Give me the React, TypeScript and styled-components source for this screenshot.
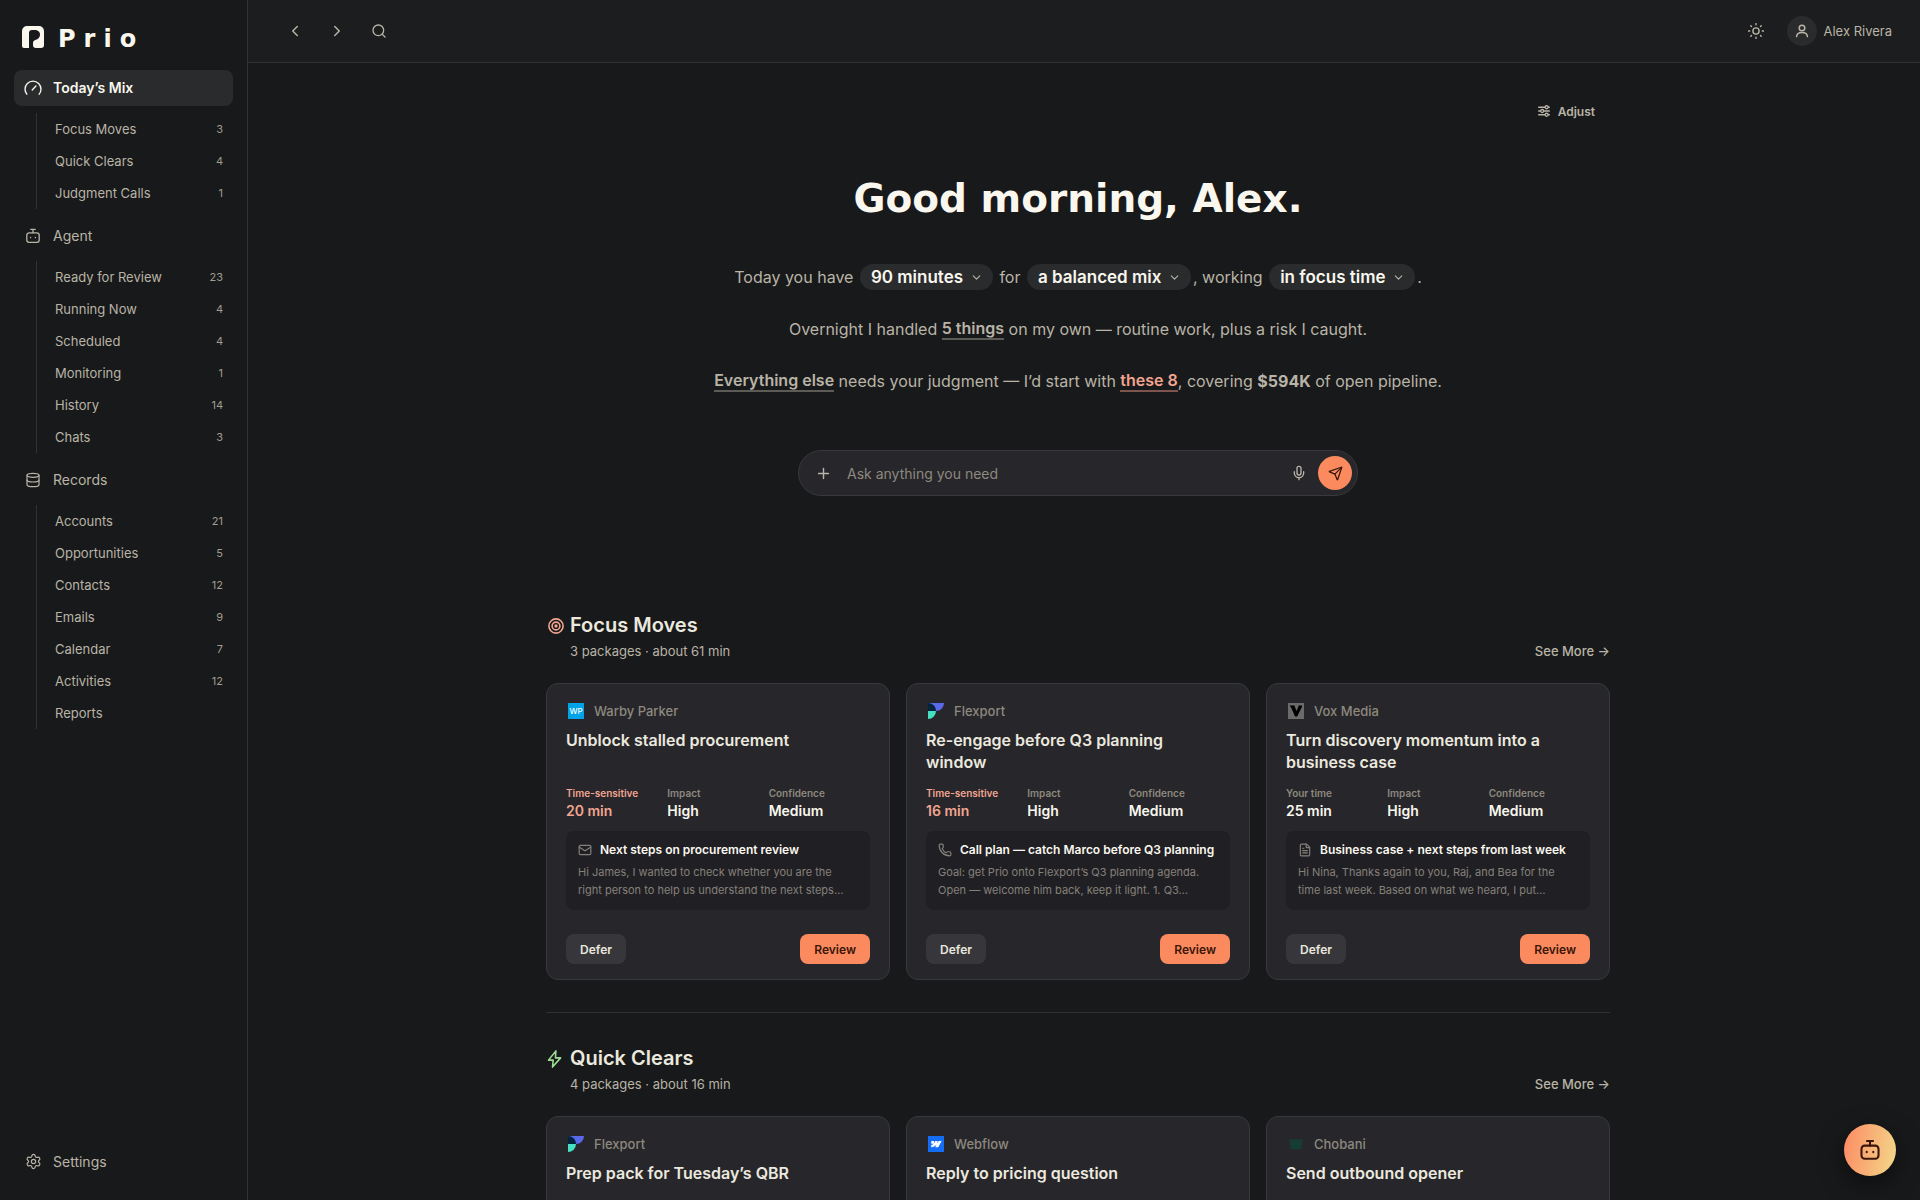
import React from "react";
import styled, { createGlobalStyle, css } from "styled-components";
import {
  ChevronDown,
  ChevronLeft,
  ChevronRight,
  Database,
  FileText,
  Mail,
  Mic,
  Phone,
  Plus,
  Search,
  Send,
  Settings,
} from "lucide-react";

const color = {
  page: "#18191a",
  header: "#1c1d1e",
  line: "#313234",
  raised: "#2a2b2d",
  card: "#27262b",
  cardLine: "#39383c",
  inset: "#201f24",
  quiet: "#37363b",
  bright: "#f9f7ee",
  strong: "#ebe9df",
  text: "#b8b4a7",
  dim: "#8d897e",
  faint: "#85817a",
  accent: "#fb8a5f",
  onAccent: "#3a1608",
  warm: "#f2a590",
  green: "#9edb96",
};

const GlobalStyle = createGlobalStyle`
  *, *::before, *::after { box-sizing: border-box; }
  body {
    margin: 0;
    background: ${color.page};
    color: ${color.text};
    font-family: Inter, "Liberation Sans", sans-serif;
    font-size: 13px;
    -webkit-font-smoothing: antialiased;
  }
  button, input, select { font: inherit; color: inherit; }
  button { cursor: pointer; }
  h1, h2, h3, p, ul, dl, dd, dt { margin: 0; padding: 0; }
  ul { list-style: none; }
  a { color: inherit; text-decoration: none; }
  svg { display: block; flex: none; }
`;

const Shell = styled.div`
  display: flex;
  height: 100vh;
  overflow: hidden;
`;

const Sidebar = styled.aside`
  display: flex;
  flex-direction: column;
  flex: none;
  width: 248px;
  padding: 26px 14px 20px;
  border-right: 1px solid ${color.line};
`;

const Brand = styled.a`
  display: flex;
  align-items: center;
  gap: 14px;
  height: 22px;
  margin-bottom: 22px;
  padding-left: 8px;
  color: ${color.bright};
`;

const BrandName = styled.span`
  padding-top: 4px;
  font-family: "DejaVu Sans", sans-serif;
  font-size: 24px;
  font-weight: 700;
  line-height: 22px;
  letter-spacing: 8px;
`;

const NavLink = styled.a<{ $active?: boolean }>`
  display: flex;
  align-items: center;
  gap: 11px;
  height: 36px;
  padding: 0 10px 1px;
  border-radius: 8px;
  font-size: 14px;
  color: ${color.text};
  ${(p) =>
    p.$active &&
    css`
      background: ${color.raised};
      color: ${color.bright};
      font-weight: 600;
    `}
`;

const NavIcon = styled.span`
  display: grid;
  place-items: center;
  width: 18px;
`;

const SubList = styled.ul`
  margin: 7px 0 9px 22px;
  border-left: 1px solid ${color.line};
`;

const SubLink = styled.a`
  display: flex;
  align-items: center;
  justify-content: space-between;
  height: 32px;
  padding: 0 10px 0 18px;
`;

const Count = styled.span`
  font-size: 11px;
  color: #a19d92;
`;

const SidebarFoot = styled.div`
  margin-top: auto;
`;

const Main = styled.div`
  display: flex;
  flex-direction: column;
  flex: 1;
  min-width: 0;
`;

const Header = styled.header`
  display: flex;
  align-items: center;
  justify-content: space-between;
  flex: none;
  height: 63px;
  padding: 0 28px 0 35px;
  background: ${color.header};
  border-bottom: 1px solid ${color.line};
`;

const Cluster = styled.div<{ $gap: number }>`
  display: flex;
  align-items: center;
  gap: ${(p) => p.$gap}px;
`;

const IconButton = styled.button`
  display: grid;
  place-items: center;
  width: 24px;
  height: 24px;
  padding: 0;
  border: 0;
  background: none;
`;

const Profile = styled.button`
  display: flex;
  align-items: center;
  gap: 7px;
  padding: 0;
  border: 0;
  background: none;
`;

const Avatar = styled.span`
  display: grid;
  place-items: center;
  width: 30px;
  height: 30px;
  border-radius: 50%;
  background: ${color.raised};
`;

const Scroller = styled.main`
  flex: 1;
  min-height: 0;
  overflow: hidden;
  padding: 33px 36px 0 24px;
`;

const Column = styled.div`
  max-width: 1064px;
  margin: 0 auto;
`;

const Toolbar = styled.div`
  display: flex;
  justify-content: flex-end;
  padding-right: 15px;
`;

const AdjustButton = styled.button`
  display: flex;
  align-items: center;
  gap: 8px;
  height: 30px;
  padding: 0;
  border: 0;
  background: none;
  font-size: 12px;
  font-weight: 600;
`;

const Hero = styled.section`
  display: flex;
  flex-direction: column;
  align-items: center;
  text-align: center;
`;

const Greeting = styled.h1`
  margin: 48px 0 40px;
  font-family: "DejaVu Sans", sans-serif;
  font-size: 39px;
  line-height: 50px;
  font-weight: 700;
  color: ${color.bright};
`;

const Sentence = styled.p`
  display: flex;
  flex-wrap: wrap;
  align-items: center;
  justify-content: center;
  min-height: 26px;
  margin-bottom: 26px;
  font-size: 16px;
  line-height: 26px;
  white-space: pre-wrap;
`;

const Pill = styled.label`
  display: flex;
  align-items: center;
  gap: 6px;
  height: 26px;
  margin: 0 2px;
  padding: 0 10px 0 11px;
  border-radius: 13px;
  background: ${color.raised};
`;

const PillSelect = styled.select`
  appearance: none;
  padding: 0;
  border: 0;
  background: none;
  color: ${color.bright};
  font-size: 17px;
  font-weight: 600;
`;

const InlineLink = styled.a<{ $warm?: boolean }>`
  font-weight: 600;
  color: ${(p) => (p.$warm ? color.warm : color.text)};
  border-bottom: 2px solid ${(p) => (p.$warm ? "#7c564c" : "#5d5b56")};
  line-height: 20px;
`;

const AskBar = styled.form`
  display: flex;
  align-items: center;
  width: 100%;
  max-width: 560px;
  height: 46px;
  margin: 30px 0 116px;
  padding: 0 5px 0 12px;
  border: 1px solid ${color.cardLine};
  border-radius: 23px;
  background: ${color.card};
`;

const AskInput = styled.input`
  flex: 1;
  min-width: 0;
  padding: 0 12px;
  border: 0;
  outline: 0;
  background: none;
  font-size: 14px;
  &::placeholder {
    color: ${color.dim};
    opacity: 1;
  }
`;

const SendButton = styled.button`
  display: grid;
  place-items: center;
  width: 34px;
  height: 34px;
  margin-left: 7px;
  padding: 0;
  border: 0;
  border-radius: 50%;
  background: ${color.accent};
  color: ${color.onAccent};
`;

const Section = styled.section`
  & + & {
    margin-top: 32px;
    padding-top: 32px;
    border-top: 1px solid ${color.line};
  }
`;

const SectionHead = styled.div`
  display: grid;
  grid-template-columns: 18px 1fr auto;
  gap: 2px 6px;
  align-items: center;
  justify-items: start;
  margin-bottom: 21px;
`;

const SectionIcon = styled.span<{ $tone: "warm" | "green" }>`
  justify-self: end;
  padding-top: 2px;
  color: ${(p) => color[p.$tone]};
`;

const SectionTitle = styled.h2`
  grid-column: 2 / 4;
  font-size: 20px;
  line-height: 26px;
  font-weight: 600;
  color: ${color.strong};
`;

const SectionMeta = styled.p`
  grid-column: 2;
  font-size: 13px;
  line-height: 22px;
`;

const SeeMore = styled.a`
  font-size: 13px;
  font-weight: 500;
  line-height: 22px;
`;

const CardGrid = styled.div`
  display: grid;
  grid-template-columns: repeat(3, minmax(0, 1fr));
  gap: 16px;
`;

const Card = styled.article`
  padding: 15px 19px;
  border: 1px solid ${color.cardLine};
  border-radius: 12px;
  background: ${color.card};
`;

const Company = styled.div`
  display: flex;
  align-items: center;
  gap: 10px;
  height: 24px;
  margin-bottom: 6px;
  padding-left: 2px;
  font-size: 13px;
  font-weight: 500;
  color: ${color.dim};
`;

const CardTitle = styled.h3`
  min-height: 44px;
  margin-bottom: 12px;
  padding-right: 16px;
  font-size: 16px;
  line-height: 22px;
  font-weight: 600;
  color: ${color.strong};
`;

const Metrics = styled.dl`
  display: grid;
  grid-template-columns: repeat(3, 1fr);
  margin-bottom: 10px;
`;

const Metric = styled.div<{ $warm?: boolean }>`
  dt {
    font-size: 10px;
    line-height: 16px;
    font-weight: 600;
    color: ${(p) => (p.$warm ? color.warm : color.dim)};
  }
  dd {
    font-size: 14px;
    line-height: 20px;
    font-weight: 600;
    color: ${(p) => (p.$warm ? color.warm : color.bright)};
  }
`;

const Preview = styled.div`
  height: 79px;
  margin-bottom: 24px;
  padding: 9px 12px;
  border-radius: 8px;
  background: ${color.inset};
  color: ${color.faint};
`;

const PreviewTitle = styled.div`
  display: flex;
  align-items: center;
  gap: 8px;
  margin-bottom: 3px;
  font-size: 12px;
  line-height: 20px;
  font-weight: 600;
  white-space: nowrap;

  span {
    color: ${color.bright};
  }
`;

const PreviewText = styled.p`
  display: -webkit-box;
  -webkit-box-orient: vertical;
  -webkit-line-clamp: 2;
  overflow: hidden;
  font-size: 11px;
  line-height: 18px;
`;

const Actions = styled.div`
  display: flex;
  justify-content: space-between;
`;

const Button = styled.button<{ $primary?: boolean }>`
  height: 30px;
  padding: 0 14px;
  border: 0;
  border-radius: 8px;
  font-size: 12px;
  font-weight: 600;
  background: ${(p) => (p.$primary ? color.accent : color.quiet)};
  color: ${(p) => (p.$primary ? color.onAccent : color.strong)};
`;

const AgentButton = styled.button`
  position: fixed;
  right: 24px;
  bottom: 24px;
  display: grid;
  place-items: center;
  width: 52px;
  height: 52px;
  padding: 0;
  border: 0;
  border-radius: 50%;
  background: linear-gradient(100deg, #fd8a63, #f3d98a);
  color: ${color.onAccent};
  box-shadow: 0 8px 24px rgba(0, 0, 0, 0.5);
`;

const Glyph = ({ size = 16, stroke = 1.5, children }: { size?: number; stroke?: number; children: React.ReactNode }) => (
  <svg
    width={size}
    height={size}
    viewBox="0 0 16 16"
    fill="none"
    stroke="currentColor"
    strokeWidth={stroke}
    strokeLinecap="round"
    strokeLinejoin="round"
    aria-hidden="true"
  >
    {children}
  </svg>
);

const GaugeIcon = () => (
  <Glyph size={18} stroke={1.2}>
    <path d="M2.5 13.5A7.2 7.2 0 0 1 .9 9a7.1 7.1 0 0 1 14.2 0 7.2 7.2 0 0 1-1.6 4.5" />
    <path d="M7.3 9.7 10.6 6.2" />
  </Glyph>
);

const BotIcon = ({ size = 16, stroke = 1.3 }: { size?: number; stroke?: number }) => (
  <Glyph size={size} stroke={stroke}>
    <rect x="1.8" y="4.8" width="12.4" height="9.6" rx="2.4" />
    <path d="M8 4.8V1.4M5.8 1.4h4.4M5.6 9.3v.4M10.4 9.3v.4" />
  </Glyph>
);

const SunIcon = () => (
  <Glyph size={16} stroke={1.4}>
    <circle cx="8" cy="8" r="3.1" />
    <path d="M8 .6v1.1M8 14.3v1.1M.6 8h1.1M14.3 8h1.1M2.8 2.8l.7.7M12.5 12.5l.7.7M2.8 13.2l.7-.7M12.5 3.5l.7-.7" />
  </Glyph>
);

const PersonIcon = () => (
  <Glyph size={14} stroke={1.7}>
    <circle cx="8" cy="4.6" r="3.2" />
    <path d="M1.8 14.4C2 11.6 4.5 9.8 8 9.8s6 1.8 6.2 4.6" />
  </Glyph>
);

const SlidersIcon = () => (
  <Glyph size={12} stroke={1.7}>
    <path d="M.8 3h8.4M13.8 3h1.4M.8 8h2.6M8 8h7.2M.8 13h8.4M13.8 13h1.4" />
    <circle cx="11.5" cy="3" r="2" />
    <circle cx="5.6" cy="8" r="2" />
    <circle cx="11.5" cy="13" r="2" />
  </Glyph>
);

const BoltIcon = () => (
  <Glyph size={18} stroke={1.4}>
    <path d="M8.8.8 2.2 9h4.200L5.800 15.200 13 7H8.400z" />
  </Glyph>
);

const TargetIcon = () => (
  <Glyph size={16} stroke={1.6}>
    <circle cx="8" cy="8" r="7.1" />
    <circle cx="8" cy="8" r="3.9" />
    <circle cx="8" cy="8" r=".9" />
  </Glyph>
);

const BrandMark = () => (
  <svg width="22" height="22" viewBox="0 0 22 22" fill="currentColor" aria-hidden="true">
    <path d="M0 20V5a5 5 0 0 1 5-5h12a5 5 0 0 1 5 5v14a3 3 0 0 1-3 3h-5a3 3 0 0 1-3-3v-2c0-1.5.8-2.5 2.3-3 3-1 4.7-2.8 4.7-5.3C18 5.6 15.8 4 12.5 4H10a3 3 0 0 0-3 3v15H2a2 2 0 0 1-2-2z" />
  </svg>
);

type LogoName = "warby" | "flexport" | "vox" | "webflow" | "chobani";

const LogoText = styled.text`
  font-family: Inter, sans-serif;
  font-size: 8px;
  fill: #fff;
`;

const Logo = ({ name }: { name: LogoName }) => (
  <svg width="16" height="16" viewBox="0 0 16 16" aria-hidden="true">
    {name === "warby" && (
      <>
        <rect width="16" height="16" fill="#00a2e8" />
        <LogoText x="8" y="11" textAnchor="middle">WP</LogoText>
      </>
    )}
    {name === "flexport" && (
      <>
        <path d="M0 0h16a8 8 0 0 1-8 8z" fill="#5a68ea" />
        <path d="M0 0a8 8 0 0 1 8 8H0z" fill="#02243c" />
        <path d="M0 8h8a8 8 0 0 1-8 8z" fill="#45e0bf" />
      </>
    )}
    {name === "vox" && (
      <>
        <rect width="16" height="16" fill="#6b6b6b" />
        <path d="M2 2.5h4.800v1.200L8.600 8l1.800-4.300V2.500H14v1.200L9.200 13.500H7L2.800 3.700H2z" fill="#000" />
      </>
    )}
    {name === "webflow" && (
      <>
        <rect width="16" height="16" fill="#146ef5" />
        <path d="M13.6 5 10.3 11.3H7.3L8.6 8.6C7.5 10.1 5.8 11.1 3.3 11.3V8.8s1.6-.1 2.5-1.1H3.3V5h2.8v2.2L7.3 5h2.2v2.2L10.6 5z" fill="#fff" />
      </>
    )}
    {name === "chobani" && <path d="M1 3.2h14L13.8 11c-.2 1.5-1 2.3-2.5 2.3H4.7c-1.5 0-2.3-.8-2.5-2.3z" fill="#183c33" />}
  </svg>
);

const groups = [
  {
    name: "Today’s Mix",
    icon: <GaugeIcon />,
    active: true,
    items: [["Focus Moves", 3], ["Quick Clears", 4], ["Judgment Calls", 1]],
  },
  {
    name: "Agent",
    icon: <BotIcon />,
    items: [["Ready for Review", 23], ["Running Now", 4], ["Scheduled", 4], ["Monitoring", 1], ["History", 14], ["Chats", 3]],
  },
  {
    name: "Records",
    icon: <Database size={16} strokeWidth={1.8} />,
    items: [["Accounts", 21], ["Opportunities", 5], ["Contacts", 12], ["Emails", 9], ["Calendar", 7], ["Activities", 12], ["Reports"]],
  },
];

type Item = {
  logo: LogoName;
  company: string;
  title: string;
  time: string;
  urgent?: boolean;
  confidence: string;
  icon: React.ReactNode;
  subject: string;
  body: string;
};

const focus: Item[] = [
  {
    logo: "warby",
    company: "Warby Parker",
    title: "Unblock stalled procurement",
    time: "20 min",
    urgent: true,
    confidence: "Medium",
    icon: <Mail size={14} strokeWidth={2} />,
    subject: "Next steps on procurement review",
    body: "Hi James, I wanted to check whether you are the right person to help us understand the next steps…",
  },
  {
    logo: "flexport",
    company: "Flexport",
    title: "Re-engage before Q3 planning window",
    time: "16 min",
    urgent: true,
    confidence: "Medium",
    icon: <Phone size={14} strokeWidth={2} />,
    subject: "Call plan — catch Marco before Q3 planning",
    body: "Goal: get Prio onto Flexport’s Q3 planning agenda. Open — welcome him back, keep it light. 1. Q3…",
  },
  {
    logo: "vox",
    company: "Vox Media",
    title: "Turn discovery momentum into a business case",
    time: "25 min",
    confidence: "Medium",
    icon: <FileText size={14} strokeWidth={2} />,
    subject: "Business case + next steps from last week",
    body: "Hi Nina, Thanks again to you, Raj, and Bea for the time last week. Based on what we heard, I put…",
  },
];

const quick: { logo: LogoName; company: string; title: string }[] = [
  { logo: "flexport", company: "Flexport", title: "Prep pack for Tuesday’s QBR" },
  { logo: "webflow", company: "Webflow", title: "Reply to pricing question" },
  { logo: "chobani", company: "Chobani", title: "Send outbound opener" },
];

const Dropdown = ({ label, value }: { label: string; value: string }) => (
  <Pill>
    <PillSelect aria-label={label}>
      <option>{value}</option>
    </PillSelect>
    <ChevronDown size={13} strokeWidth={2} />
  </Pill>
);

const Heading = ({
  icon,
  tone,
  title,
  meta,
}: {
  icon: React.ReactNode;
  tone: "warm" | "green";
  title: string;
  meta: string;
}) => (
  <SectionHead>
    <SectionIcon $tone={tone}>{icon}</SectionIcon>
    <SectionTitle>{title}</SectionTitle>
    <SectionMeta>{meta}</SectionMeta>
    <SeeMore href="#">See More →</SeeMore>
  </SectionHead>
);

export default function App() {
  return (
    <>
      <GlobalStyle />
      <Shell>
        <Sidebar>
          <Brand href="#">
            <BrandMark />
            <BrandName>Prio</BrandName>
          </Brand>
          <nav>
            {groups.map((g) => (
              <React.Fragment key={g.name}>
                <NavLink href="#" $active={g.active}>
                  <NavIcon>{g.icon}</NavIcon>
                  {g.name}
                </NavLink>
                <SubList>
                  {g.items.map(([name, count]) => (
                    <li key={name}>
                      <SubLink href="#">
                        {name}
                        {count !== undefined && <Count>{count}</Count>}
                      </SubLink>
                    </li>
                  ))}
                </SubList>
              </React.Fragment>
            ))}
          </nav>
          <SidebarFoot>
            <NavLink href="#">
              <NavIcon><Settings size={17} strokeWidth={1.7} /></NavIcon>
              Settings
            </NavLink>
          </SidebarFoot>
        </Sidebar>

        <Main>
          <Header>
            <Cluster $gap={18}>
              <IconButton aria-label="Back"><ChevronLeft size={18} /></IconButton>
              <IconButton aria-label="Forward"><ChevronRight size={18} /></IconButton>
              <IconButton aria-label="Search"><Search size={16} /></IconButton>
            </Cluster>
            <Cluster $gap={19}>
              <IconButton aria-label="Theme"><SunIcon /></IconButton>
              <Profile>
                <Avatar><PersonIcon /></Avatar>
                Alex Rivera
              </Profile>
            </Cluster>
          </Header>

          <Scroller>
            <Column>
              <Toolbar>
                <AdjustButton>
                  <SlidersIcon />
                  Adjust
                </AdjustButton>
              </Toolbar>

              <Hero>
                <Greeting>Good morning, Alex.</Greeting>
                <Sentence>
                  <span>Today you have </span>
                  <Dropdown label="Time available" value="90 minutes" />
                  <span> for </span>
                  <Dropdown label="Kind of work" value="a balanced mix" />
                  <span>, working </span>
                  <Dropdown label="Working mode" value="in focus time" />
                  <span>.</span>
                </Sentence>
                <Sentence>
                  <span>Overnight I handled </span>
                  <InlineLink href="#">5 things</InlineLink>
                  <span> on my own — routine work, plus a risk I caught.</span>
                </Sentence>
                <Sentence>
                  <InlineLink href="#">Everything else</InlineLink>
                  <span> needs your judgment — I’d start with </span>
                  <InlineLink href="#" $warm>these 8</InlineLink>
                  <span>, covering <strong>$594K</strong> of open pipeline.</span>
                </Sentence>
                <AskBar>
                  <IconButton type="button" aria-label="Add"><Plus size={17} /></IconButton>
                  <AskInput aria-label="Ask" placeholder="Ask anything you need" />
                  <IconButton type="button" aria-label="Dictate"><Mic size={16} /></IconButton>
                  <SendButton type="button" aria-label="Send"><Send size={15} /></SendButton>
                </AskBar>
              </Hero>

              <Section>
                <Heading icon={<TargetIcon />} tone="warm" title="Focus Moves" meta="3 packages · about 61 min" />
                <CardGrid>
                  {focus.map((c) => (
                    <Card key={c.title}>
                      <Company><Logo name={c.logo} />{c.company}</Company>
                      <CardTitle>{c.title}</CardTitle>
                      <Metrics>
                        <Metric $warm={c.urgent}>
                          <dt>{c.urgent ? "Time-sensitive" : "Your time"}</dt>
                          <dd>{c.time}</dd>
                        </Metric>
                        <Metric><dt>Impact</dt><dd>High</dd></Metric>
                        <Metric><dt>Confidence</dt><dd>{c.confidence}</dd></Metric>
                      </Metrics>
                      <Preview>
                        <PreviewTitle>{c.icon}<span>{c.subject}</span></PreviewTitle>
                        <PreviewText>{c.body}</PreviewText>
                      </Preview>
                      <Actions>
                        <Button>Defer</Button>
                        <Button $primary>Review</Button>
                      </Actions>
                    </Card>
                  ))}
                </CardGrid>
              </Section>

              <Section>
                <Heading icon={<BoltIcon />} tone="green" title="Quick Clears" meta="4 packages · about 16 min" />
                <CardGrid>
                  {quick.map((c) => (
                    <Card key={c.title}>
                      <Company><Logo name={c.logo} />{c.company}</Company>
                      <CardTitle>{c.title}</CardTitle>
                    </Card>
                  ))}
                </CardGrid>
              </Section>
            </Column>
          </Scroller>
        </Main>
        <AgentButton aria-label="Open agent"><BotIcon size={22} stroke={1.5} /></AgentButton>
      </Shell>
    </>
  );
}
